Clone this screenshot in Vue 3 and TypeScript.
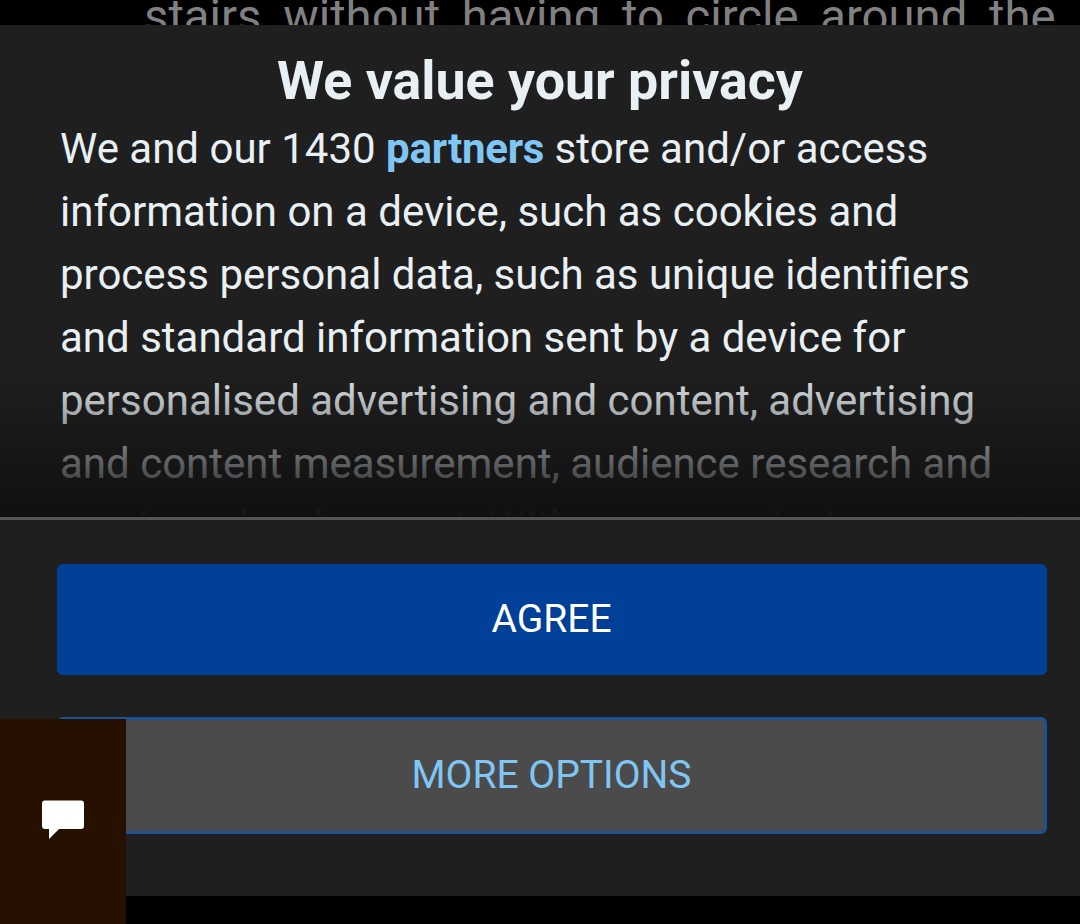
<script setup lang="ts">
const articleText = 'stairs without having to circle around the'
const paragraph: string[] = [
  'information on a device, such as cookies and',
  'process personal data, such as unique identifiers',
  'and standard information sent by a device for',
  'personalised advertising and content, advertising',
  'and content measurement, audience research and',
  'services development. With your permission',
]
</script>

<template>
  <main class="screen">
    <div class="article">{{ articleText }}</div>
    <section class="dialog">
      <div class="notice">
        <h1>We value your privacy</h1>
        <div class="copy">
          <div>We and our 1430 <a class="partners">partners</a> store and/or access</div>
          <div v-for="line in paragraph" :key="line">{{ line }}</div>
        </div>
        <div class="fade"></div>
      </div>
      <div class="actions">
        <button class="agree">AGREE</button>
        <button class="more">MORE OPTIONS</button>
      </div>
    </section>
    <button class="chat" aria-label="Comments">
      <svg width="42" height="40" viewBox="0 0 42 40"><path d="M3 .5H39Q42 .5 42 3.5V26Q42 29 39 29H17L7 39V29H3Q0 29 0 26V3.5Q0 .5 3 .5Z" fill="#fff"/></svg>
    </button>
  </main>
</template>

<style>
body { background: #000; overflow: hidden; }
</style>
<style scoped>
.screen { position: relative; width: 1080px; height: 924px; overflow: hidden; background: #000; font-family: Roboto, sans-serif; }
.article { height: 25px; box-sizing: border-box; padding-left: 144px; overflow: hidden; color: #808080; font-size: 47.25px; line-height: 35px; white-space: nowrap; word-spacing: 10px; }
.dialog { height: 871px; background: #1f1f1f; }
.notice { position: relative; box-sizing: border-box; height: 495px; overflow: hidden; border-bottom: 3px solid #555; }
h1 { box-sizing: border-box; margin: 0; padding-top: 24px; height: 92px; text-align: center; font-size: 53.75px; line-height: 63px; font-weight: 700; color: #e8f0f4; }
.copy { padding-left: 60px; color: #e8f0f4; font-size: 42px; line-height: 63px; white-space: nowrap; }
.partners { color: #80c6f5; font-weight: 700; letter-spacing: -0.22px; }
.fade { position: absolute; inset: auto 0 0; height: 150px; background: linear-gradient(transparent, #101010); }
.actions { padding: 44px 33px 0 57px; }
button { display: block; border: 0; font-family: inherit; }
.agree, .more { width: 990px; border-radius: 6px; font-size: 39px; }
.agree { height: 111px; padding: 0 1px 2px 0; background: #004099; color: #fff; }
.more { margin-top: 42px; height: 117px; padding: 0 1px 1px 0; border: 3px solid #1d5292; background: #4b4b4b; color: #80c6f5; }
.chat { position: absolute; left: 0; bottom: 0; width: 126px; height: 205px; padding: 0 0 3px 42px; background: #261000; }
.chat svg { display: block; }
</style>
